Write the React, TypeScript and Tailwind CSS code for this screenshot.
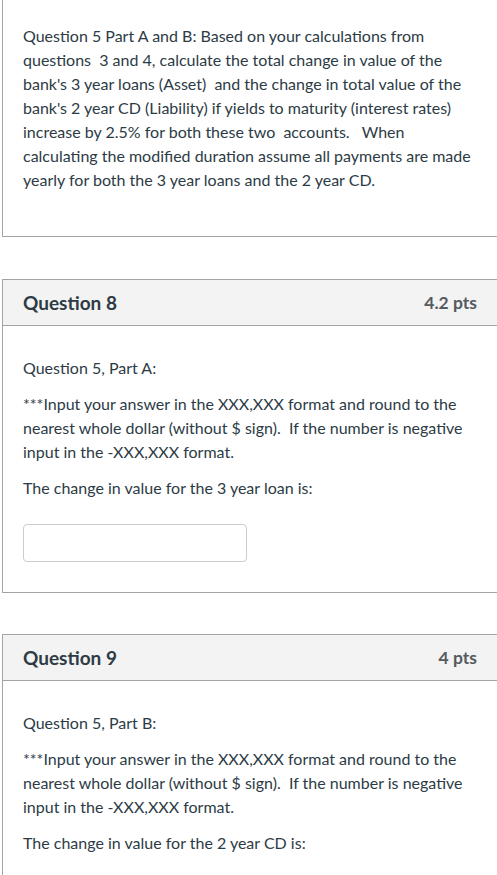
import React from "react";

const questions = [
  {
    title: "Question 8",
    pts: "4.2 pts",
    part: "Question 5, Part A:",
    label: "The change in value for the 3 year loan is:",
    input: true,
  },
  {
    title: "Question 9",
    pts: "4 pts",
    part: "Question 5, Part B:",
    label: "The change in value for the 2 year CD is:",
    input: false,
  },
];

const QuestionCard = ({ q }: { q: (typeof questions)[number] }) => {
  return (
    <div className="flex flex-col w-full border border-r-0 border-[#a3a3a3]">
      <div className="flex flex-row items-center justify-between h-[46px] px-[20px] bg-[#f3f3f3] border-b border-[#a3a3a3]">
        <p className="text-[19px] font-bold text-[#2d3b45]">{q.title}</p>
        <p className="text-[17.5px] font-bold text-[#555a5e]">{q.pts}</p>
      </div>
      <div className="flex flex-col items-start gap-[12px] px-[20px] pt-[30px] pb-[30px]">
        <p>{q.part}</p>
        <p>
          ***Input your answer in the XXX,XXX format and round to the nearest
          whole dollar (without $ sign).&nbsp; If the number is negative input
          in the -XXX,XXX format.
        </p>
        <p>{q.label}</p>
        {q.input && (
          <div className="w-[224px] h-[38px] mt-[12px] border border-[#c7cdd1] rounded-[4px] bg-white"></div>
        )}
      </div>
    </div>
  );
};

export default function App() {
  return (
    <div
      className="flex flex-col w-[497px] h-[875px] overflow-hidden bg-white text-[16px] leading-[24px] text-[#2d3b45]"
      style={{ fontFamily: "Lato, 'Liberation Sans', sans-serif" }}
    >
      <div className="w-full h-[3px] bg-[#3b3b3b]"></div>
      <div className="flex flex-col pl-[2px]">
        <div className="flex flex-col w-full h-[237px] border-l border-b border-[#a3a3a3] px-[20px] pt-[24px]">
          <p>
            Question 5 Part A and B: Based on your calculations from
            questions&nbsp; 3 and 4, calculate the total change in value of the
            bank's 3 year loans (Asset)&nbsp; and the change in total value of
            the bank's 2 year CD (Liability) if yields to maturity (interest
            rates) increase by 2.5% for both these two&nbsp; accounts.&nbsp;
            &nbsp;When calculating the modified duration assume all payments are
            made yearly for both the 3 year loans and the 2 year CD.
          </p>
        </div>
        <div className="flex flex-col gap-[41px] pt-[42px]">
          {questions.map((q) => (
            <QuestionCard key={q.title} q={q} />
          ))}
        </div>
      </div>
    </div>
  );
}
